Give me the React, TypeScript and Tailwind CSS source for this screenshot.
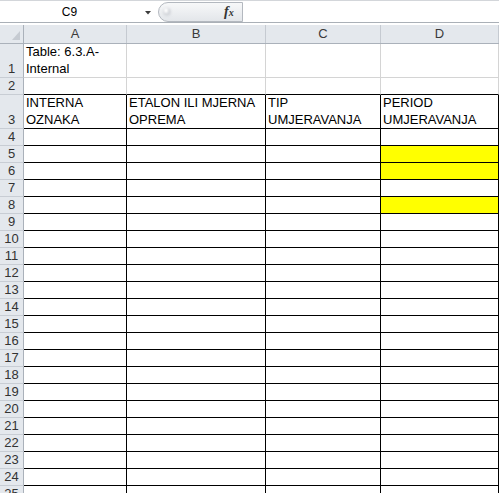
import React from "react";

type Row = {
  n: string;
  h: string;
  cells: React.ReactNode[];
  bordered: boolean;
  blackBottom?: boolean;
  yellowD?: boolean;
};

const colW = ["w-[103px]", "w-[139px]", "w-[115px]", "flex-1"];

function buildRows(): Row[] {
  const rows: Row[] = [
    {
      n: "1",
      h: "h-[34px]",
      cells: [
        <>
          Table: 6.3.A-
          <br />
          Internal
        </>,
        "",
        "",
        "",
      ],
      bordered: false,
    },
    { n: "2", h: "h-[17px]", cells: ["", "", "", ""], bordered: false, blackBottom: true },
    {
      n: "3",
      h: "h-[34px]",
      cells: [
        <>
          INTERNA
          <br />
          OZNAKA
        </>,
        <>
          ETALON ILI MJERNA
          <br />
          OPREMA
        </>,
        <>
          TIP
          <br />
          UMJERAVANJA
        </>,
        <>
          PERIOD
          <br />
          UMJERAVANJA
        </>,
      ],
      bordered: true,
    },
  ];
  for (let i = 4; i <= 25; i++) {
    rows.push({
      n: String(i),
      h: "h-[17px]",
      cells: ["", "", "", ""],
      bordered: true,
      yellowD: i === 5 || i === 6 || i === 8,
    });
  }
  return rows;
}

export default function App() {
  const rows = buildRows();
  return (
    <div className="w-[499px] h-[493px] overflow-hidden bg-white font-['Liberation_Sans',Arial,sans-serif] text-black">
      {/* Formula bar */}
      <div className="h-[23px] flex border-t border-b border-t-[#d3d6da] border-b-[#aab0b7] bg-white">
        <div className="relative w-[156px] shrink-0 flex items-center">
          <span className="w-[139px] text-center text-[12px] leading-[21px] text-black pt-[1px]">C9</span>
          <svg className="absolute left-[145px] top-[10px]" width="6" height="4" viewBox="0 0 6 4">
            <path d="M0 0 L6 0 L3 3.5 Z" fill="#3c3c3c" />
          </svg>
        </div>
        <div className="w-[2px] shrink-0" />
        <div className="relative mt-[1px] w-[85px] h-[20px] shrink-0 rounded-l-[10px] border border-[#b3b8bf] bg-gradient-to-b from-[#f7f8f9] to-[#e3e6ea]">
          <div className="absolute left-[4px] top-[5px] w-[8px] h-[8px] rounded-full bg-[#d4d7dc] blur-[1px]" />
          <div className="absolute left-[5px] top-[5px] w-[4px] h-[5px] rounded-full bg-white blur-[1px]" />
          <span className="absolute left-[65px] top-[1px] font-['Liberation_Serif',serif] italic font-bold text-[14px] leading-[16px] text-[#333]">
            f<span className="text-[10px]">x</span>
          </span>
        </div>
        <div className="flex-1 bg-white" />
      </div>
      <div className="h-[2px] bg-white" />
      {/* Column headers */}
      <div className="flex h-[19px] border-b border-[#aab1ba] bg-[#e4e8ed]">
        <div className="relative w-[24px] shrink-0 border-r border-[#aab1ba]">
          <svg className="absolute left-[12px] top-[6px]" width="8" height="9" viewBox="0 0 8 9">
            <path d="M8 0 L8 9 L0 9 Z" fill="#c6cbd2" />
          </svg>
        </div>
        {["A", "B", "C", "D"].map((l, i) => (
          <div
            key={l}
            className={`${colW[i]} shrink-0 border-r border-[#c5cad1] text-center text-[13px] leading-[18px] text-[#3a3a3a]`}
          >
            {l}
          </div>
        ))}
      </div>
      {/* Rows */}
      {rows.map((r) => (
        <div key={r.n} className={`flex ${r.h}`}>
          <div className="w-[24px] shrink-0 border-r border-b border-r-[#aab1ba] border-b-[#c8cdd4] bg-[#e4e8ed] flex items-end justify-center text-[13px] leading-[16px] text-[#333]">
            {r.n}
          </div>
          {r.cells.map((c, i) => {
            const border = r.bordered
              ? "border-r border-b border-black"
              : r.blackBottom
              ? "border-r border-b border-r-[#d4d4d4] border-b-black"
              : "border-r border-b border-[#d4d4d4]";
            const bg = i === 3 && r.yellowD ? "bg-[#ffff00]" : "bg-white";
            return (
              <div
                key={i}
                className={`${colW[i]} shrink-0 ${border} ${bg} flex items-end pl-[2px] text-[13px] leading-[17px] whitespace-nowrap`}
              >
                <div>{c}</div>
              </div>
            );
          })}
        </div>
      ))}
    </div>
  );
}
